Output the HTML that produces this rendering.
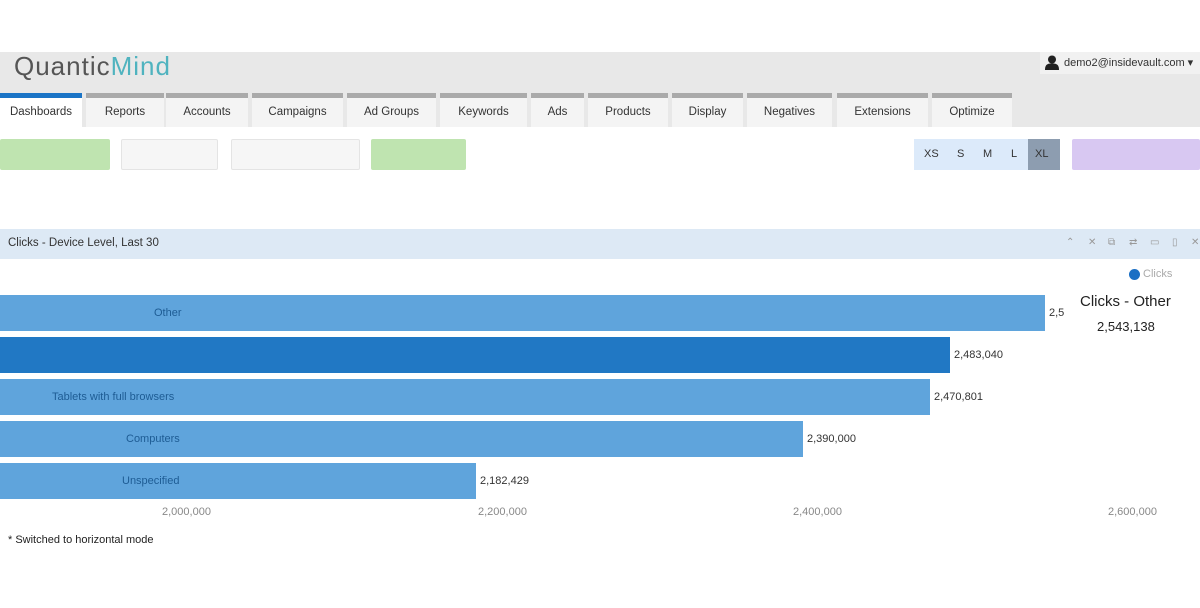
<!DOCTYPE html>
<html><head><meta charset="utf-8"><style>
*{margin:0;padding:0;box-sizing:border-box}
body{width:1200px;height:608px;background:#fff;font-family:"Liberation Sans",sans-serif;position:relative;overflow:hidden;color:#333}
.a{position:absolute}
.hdr{left:0;top:52px;width:1200px;height:75px;background:#e8e8e8}
.logo{left:14px;top:51px;font-size:26px;color:#555;letter-spacing:1px}
.logo span{color:#4fb3bf}
.user{left:1040px;top:52px;width:160px;height:22px;background:#f1f1f1;font-size:11px;color:#333;padding:4px 0 0 24px;white-space:nowrap;overflow:hidden}
.tab{top:93px;height:34px;background:#f4f4f4;border-top:5px solid #aaa;font-size:11.5px;text-align:center;line-height:28px;color:#333}
.tab.act{background:#fff;border-top-color:#1a74c6}
.btn{top:139px;height:31px;border-radius:2px}
.sz{top:139px;left:914px;width:146px;height:31px;background:#dceafa;font-size:11px}
.sz span{position:absolute;top:9px}
.ph{left:0;top:229px;width:1200px;height:30px;background:#dde9f5;font-size:11.5px;padding:8px 0 0 8px;color:#333}
.bar{left:0;height:36px;background:#5fa4dc;font-size:11px;color:#1e5c94}
.bl{position:absolute;top:12px}
.v{font-size:11px;color:#333}
.ax{top:506px;font-size:11px;color:#888}
.ic{top:237px;font-size:10px;color:#999}
</style></head><body>
<div class="a hdr"></div>
<div class="a logo">Quantic<span>Mind</span></div>
<div class="a user"><svg class="a" style="left:5px;top:3px" width="14" height="15" viewBox="0 0 14 15"><circle cx="7" cy="4.5" r="4" fill="#222"/><path d="M0 15 C0 9 3 8.5 7 8.5 C11 8.5 14 9 14 15Z" fill="#222"/></svg>demo2@insidevault.com ▾</div>
<div class="a tab act" style="left:0;width:82px">Dashboards</div>
<div class="a tab" style="left:86px;width:78px">Reports</div>
<div class="a tab" style="left:166px;width:82px">Accounts</div>
<div class="a tab" style="left:252px;width:91px">Campaigns</div>
<div class="a tab" style="left:347px;width:89px">Ad Groups</div>
<div class="a tab" style="left:440px;width:87px">Keywords</div>
<div class="a tab" style="left:531px;width:53px">Ads</div>
<div class="a tab" style="left:588px;width:80px">Products</div>
<div class="a tab" style="left:672px;width:71px">Display</div>
<div class="a tab" style="left:747px;width:85px">Negatives</div>
<div class="a tab" style="left:837px;width:91px">Extensions</div>
<div class="a tab" style="left:932px;width:80px">Optimize</div>
<div class="a btn" style="left:0;width:110px;background:#bfe4b0"></div>
<div class="a btn" style="left:121px;width:97px;background:#f6f6f6;border:1px solid #e4e4e4"></div>
<div class="a btn" style="left:231px;width:129px;background:#f6f6f6;border:1px solid #e4e4e4"></div>
<div class="a btn" style="left:371px;width:95px;background:#bfe4b0"></div>
<div class="a sz"><span style="left:10px">XS</span><span style="left:43px">S</span><span style="left:69px">M</span><span style="left:97px">L</span><div class="a" style="left:114px;top:0;width:32px;height:31px;background:#8d9db0"></div><span style="left:121px">XL</span></div>
<div class="a btn" style="left:1072px;width:128px;background:#d8c8f2"></div>
<div class="a ph">Clicks - Device Level, Last 30</div>
<div class="a ic" style="left:1066px">⌃</div>
<div class="a ic" style="left:1088px">✕</div>
<div class="a ic" style="left:1108px">⧉</div>
<div class="a ic" style="left:1129px">⇄</div>
<div class="a ic" style="left:1150px">▭</div>
<div class="a ic" style="left:1172px">▯</div>
<div class="a ic" style="left:1191px">✕</div>
<div class="a" style="left:1129px;top:269px;width:11px;height:11px;border-radius:50%;background:#1a6fc4"></div>
<div class="a" style="left:1143px;top:268px;font-size:11px;color:#aaa">Clicks</div>
<div class="a" style="left:1080px;top:293px;font-size:15px;color:#222">Clicks - Other</div>
<div class="a" style="left:1097px;top:319px;font-size:13px;color:#222">2,543,138</div>
<div class="a bar" style="top:295px;width:1045px"><span class="bl" style="left:154px">Other</span></div>
<div class="a v" style="left:1049px;top:307px">2,5</div>
<div class="a bar" style="top:337px;width:950px;background:#2178c4"></div>
<div class="a v" style="left:954px;top:349px">2,483,040</div>
<div class="a bar" style="top:379px;width:930px"><span class="bl" style="left:52px">Tablets with full browsers</span></div>
<div class="a v" style="left:934px;top:391px">2,470,801</div>
<div class="a bar" style="top:421px;width:803px"><span class="bl" style="left:126px">Computers</span></div>
<div class="a v" style="left:807px;top:433px">2,390,000</div>
<div class="a bar" style="top:463px;width:476px"><span class="bl" style="left:122px">Unspecified</span></div>
<div class="a v" style="left:480px;top:475px">2,182,429</div>
<div class="a ax" style="left:162px">2,000,000</div>
<div class="a ax" style="left:478px">2,200,000</div>
<div class="a ax" style="left:793px">2,400,000</div>
<div class="a ax" style="left:1108px">2,600,000</div>
<div class="a" style="left:8px;top:534px;font-size:11px;color:#222">* Switched to horizontal mode</div>
</body></html>
